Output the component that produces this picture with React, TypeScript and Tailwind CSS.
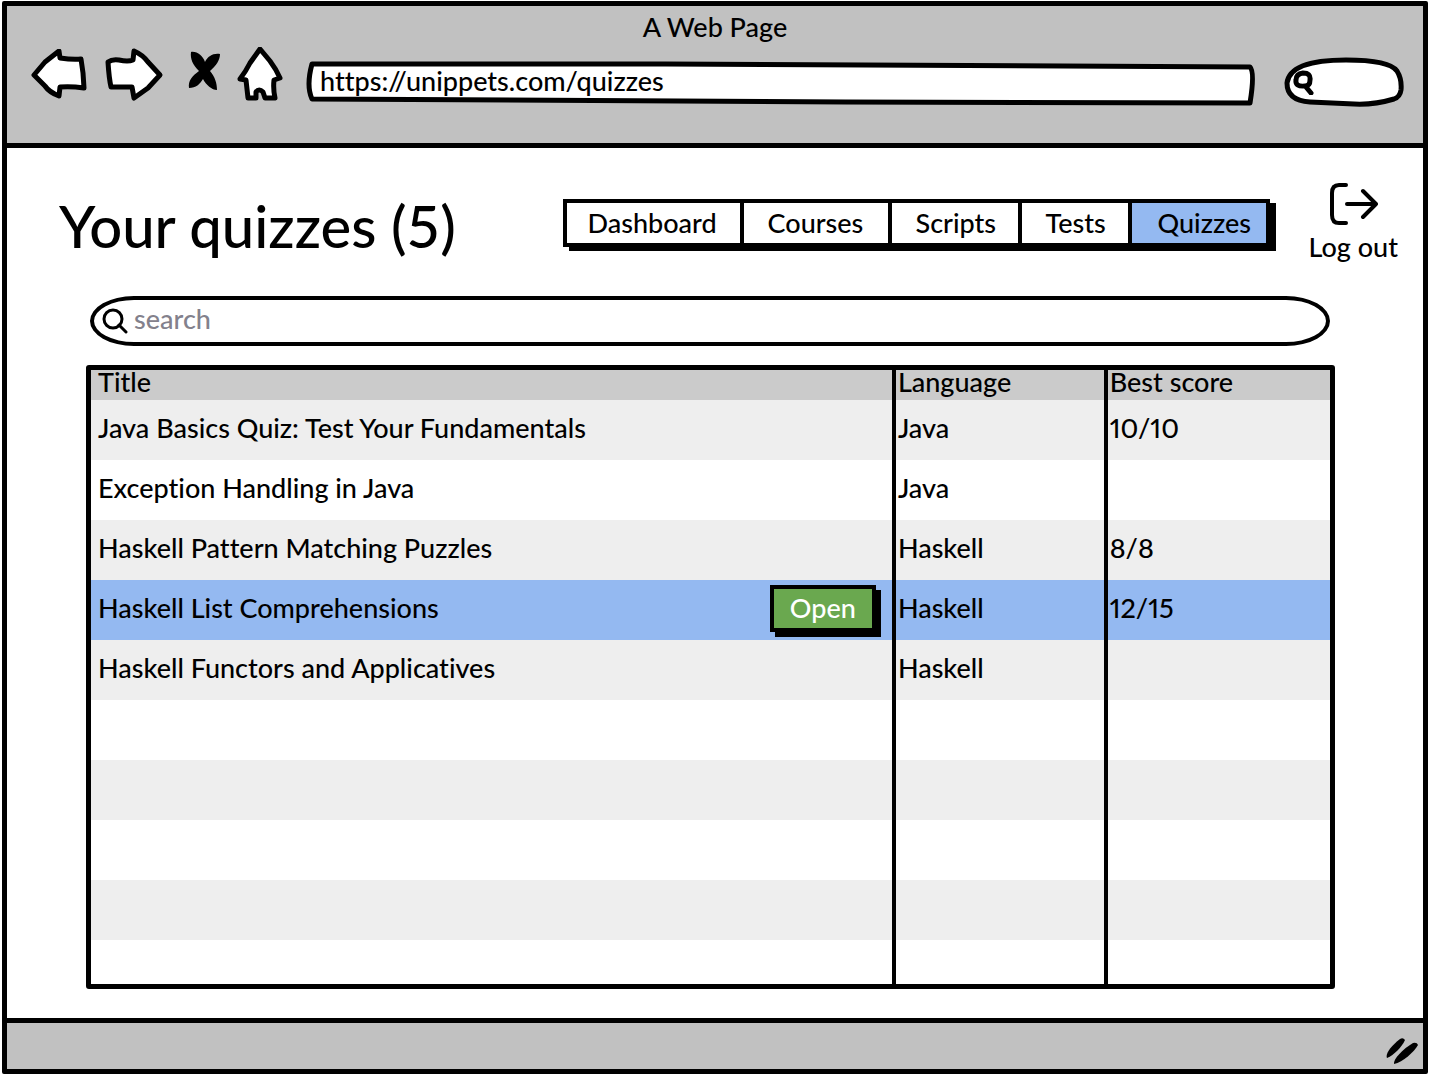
import React from "react";

const NAV = [
  { label: "Dashboard", cls: "w-[177px] pl-[21px]" },
  { label: "Courses", cls: "w-[148px] pl-[24px]" },
  { label: "Scripts", cls: "w-[130px] pl-[24px]" },
  { label: "Tests", cls: "w-[110px] pl-[24px]" },
];

const QUIZZES = [
  { title: "Java Basics Quiz: Test Your Fundamentals", language: "Java", score: "10/10" },
  { title: "Exception Handling in Java", language: "Java", score: "" },
  { title: "Haskell Pattern Matching Puzzles", language: "Haskell", score: "8/8" },
  { title: "Haskell List Comprehensions", language: "Haskell", score: "12/15", selected: true },
  { title: "Haskell Functors and Applicatives", language: "Haskell", score: "" },
  { title: "", language: "", score: "" },
  { title: "", language: "", score: "" },
  { title: "", language: "", score: "" },
  { title: "", language: "", score: "" },
];

const line = {
  fill: "#fff",
  stroke: "#000",
  strokeWidth: 5,
  strokeLinejoin: "round" as const,
  strokeLinecap: "round" as const,
};

function BackIcon() {
  return (
    <svg width="56" height="52" viewBox="0 0 56 52" aria-hidden="true">
      <path {...line} d="M3 26 L14 13 L28 2 L29 9 Q42 11 50 10 L52 24 L53 39 Q40 37 29 38 L28 47 Q18 43 14 37 Z" />
    </svg>
  );
}

function ForwardIcon() {
  return (
    <svg width="60" height="54" viewBox="0 0 60 54" aria-hidden="true">
      <path {...line} d="M4 14 Q8 11 15 12 Q24 14 29 12 L30 3 Q39 7 44 14 L56 27 L44 40 L30 50 L28 39 L7 39 Q5 30 4 14 Z" />
    </svg>
  );
}

function StopIcon() {
  return (
    <svg width="34" height="40" viewBox="0 0 34 40" aria-hidden="true">
      <path d="M3 1 C9 0 15 5 17 11 C20 5 25 2 32 3 C32 9 28 15 22 20 C27 26 29 32 29 39 C24 39 18 34 15 28 C12 33 8 37 1 37 C0 30 4 25 11 20 C5 14 2 8 3 1 Z" />
    </svg>
  );
}

function HomeIcon() {
  return (
    <svg width="46" height="56" viewBox="0 0 46 56" aria-hidden="true">
      <path {...line} d="M23 2 L33 14 Q39 22 43 31 L37 33 Q36 42 38 51 L28 51 L26 45 Q22 41 19 45 L19 51 L11 51 L9 33 L3 32 Q9 24 13 16 Z" />
    </svg>
  );
}

function SmallSearchIcon() {
  return (
    <svg width="22" height="26" viewBox="0 0 22 26" aria-hidden="true">
      <path {...line} d="M11 4 Q19 4 18 11 Q18 17 13 17 Q3 18 4 11 Q4 5 11 4 Z M14 18 L19 24" />
    </svg>
  );
}

function SearchIcon() {
  return (
    <svg width="26" height="26" viewBox="0 0 26 26" aria-hidden="true" fill="none" stroke="#000" strokeWidth="3" strokeLinecap="round">
      <circle cx="11" cy="11" r="9" />
      <path d="M17 17 L24 24" />
    </svg>
  );
}

function LogoutIcon() {
  return (
    <svg width="50" height="44" viewBox="0 0 50 44" aria-hidden="true" fill="none" stroke="#000" strokeWidth="4" strokeLinecap="round" strokeLinejoin="round">
      <path d="M18 3 H11 Q4 3 4 11 V33 Q4 41 11 41 H18" />
      <path d="M19 22 H48 M35 9 L48 22 L35 35" />
    </svg>
  );
}

function UrlOutline() {
  return (
    <svg className="absolute inset-0 h-full w-full" viewBox="0 0 950 46" preserveAspectRatio="none" aria-hidden="true">
      <path {...line} vectorEffect="non-scaling-stroke" d="M6 4 L360 4 L945 7 Q950 12 945 43 L540 42 L6 39 Q0 26 6 4 Z" />
    </svg>
  );
}

function PillOutline() {
  return (
    <svg className="absolute inset-0 h-full w-full" viewBox="0 0 120 50" preserveAspectRatio="none" aria-hidden="true">
      <path {...line} vectorEffect="non-scaling-stroke" d="M3 26 C5 10 26 3 62 3 C90 3 108 7 113 14 Q118 22 117 33 Q116 40 110 42 Q90 48 70 47 L26 45 C10 44 3 37 3 26 Z" />
    </svg>
  );
}

function GripIcon() {
  return (
    <svg width="34" height="28" viewBox="0 0 34 28" aria-hidden="true">
      <path d="M3 20 C1 16 7 8 16 1 Q19 -1 21 2 C18 9 10 17 3 20 Z" />
      <path d="M10 26 C9 21 19 11 29 5 Q33 4 34 7 C30 14 19 24 10 26 Z" />
    </svg>
  );
}

export default function App() {
  return (
    <div className="flex min-h-screen flex-col bg-white px-[2px] pt-[1px] pb-[2px] font-['Lato',sans-serif] text-[27px] leading-[30px] font-medium text-black [font-variant-ligatures:none]">
      <div className="flex grow flex-col rounded-[2px] border-5 border-black">
        <header className="flex h-[142px] flex-col border-b-5 border-black bg-[#c1c1c1]">
          <div className="h-[37px] pt-[6px] text-center">A Web Page</div>
          <div className="flex items-center pr-[19px] pl-[24px]">
            <button aria-label="Back" className="mr-[17px]"><BackIcon /></button>
            <button aria-label="Forward" className="mr-[24px]"><ForwardIcon /></button>
            <button aria-label="Stop" className="mr-[15px] mb-[8px]"><StopIcon /></button>
            <button aria-label="Home" className="mr-[23px]"><HomeIcon /></button>
            <div className="relative mt-[16px] mr-[29px] h-[46px] grow">
              <UrlOutline />
              <input aria-label="Address" defaultValue="https://unippets.com/quizzes" className="relative h-[40px] w-full bg-transparent pr-4 pl-[14px] outline-none" />
            </div>
            <div className="relative mt-[14px] flex h-[50px] w-[120px] shrink-0 items-center gap-1 pr-3 pl-[8px]">
              <PillOutline />
              <span className="relative shrink-0"><SmallSearchIcon /></span>
              <input aria-label="Web search" className="relative w-full min-w-0 bg-transparent text-[18px] outline-none" />
            </div>
          </div>
        </header>

        <main className="grow pr-[25px] pl-[52px]">
          <div className="flex h-[148px] items-start">
            <h1 className="grow pt-[46px] text-[58px] leading-[64px]">Your quizzes (5)</h1>
            <nav aria-label="Main" className="mt-[51px] mr-[39px] flex h-[48px] border-4 border-black bg-white shadow-[6px_4px_0_0_#000]">
              {NAV.map((item) => (
                <a key={item.label} href={"#" + item.label.toLowerCase()} className={"flex items-center border-r-4 border-black " + item.cls}>
                  {item.label}
                </a>
              ))}
              <a href="#quizzes" aria-current="page" className="flex w-[134px] items-center bg-[#94b9f1] pl-[26px]">Quizzes</a>
            </nav>
            <button className="mt-[34px] flex flex-col items-center">
              <LogoutIcon />
              <span className="mt-[6px]">Log out</span>
            </button>
          </div>

          <div className="mr-[68px] ml-[31px] flex h-[50px] items-center gap-[6px] rounded-[44px/25px] border-4 border-black pl-[8px]">
            <SearchIcon />
            <input type="search" aria-label="Search quizzes" placeholder="search" className="h-full grow bg-transparent pb-[6px] outline-none placeholder:text-[#83818c]" />
          </div>

          <div className="mt-[19px] mr-[63px] ml-[27px] rounded-[3px] border-5 border-black">
            <table className="w-full table-fixed border-collapse text-left">
              <colgroup>
                <col className="w-[64.8%]" />
                <col className="w-[17.1%]" />
                <col className="w-[18.1%]" />
              </colgroup>
              <thead>
                <tr className="h-[30px] bg-[#cbcbcb] align-top leading-[24px]">
                  <th className="border-r-4 border-black p-0 pl-[7px] font-medium">Title</th>
                  <th className="border-r-4 border-black p-0 pl-[2px] font-medium">Language</th>
                  <th className="p-0 pl-[2px] font-medium">Best score</th>
                </tr>
              </thead>
              <tbody>
                {QUIZZES.map((quiz, i) => (
                  <tr key={i} className={"h-[60px] " + (quiz.selected ? "bg-[#94b9f1]" : i % 2 === 0 ? "bg-[#eeeeee]" : "bg-white")}>
                    <td className="border-r-4 border-black p-0 pb-[4px] pl-[7px]">
                      <div className="flex items-center justify-between pr-[16px]">
                        <span>{quiz.title}</span>
                        {quiz.selected && (
                          <button className="h-[47px] w-[106px] border-4 border-black bg-[#6aa84f] text-white shadow-[5px_5px_0_0_#000]">Open</button>
                        )}
                      </div>
                    </td>
                    <td className="border-r-4 border-black p-0 pb-[4px] pl-[2px]">{quiz.language}</td>
                    <td className="p-0 pb-[4px] pl-[2px] proportional-nums">{quiz.score}</td>
                  </tr>
                ))}
                <tr className="h-[44px]">
                  <td className="border-r-4 border-black p-0" />
                  <td className="border-r-4 border-black p-0" />
                  <td className="p-0" />
                </tr>
              </tbody>
            </table>
          </div>
        </main>

        <footer className="flex h-[51px] items-center justify-end border-t-5 border-black bg-[#c1c1c1] pt-[12px] pr-[5px]">
          <GripIcon />
        </footer>
      </div>
    </div>
  );
}
